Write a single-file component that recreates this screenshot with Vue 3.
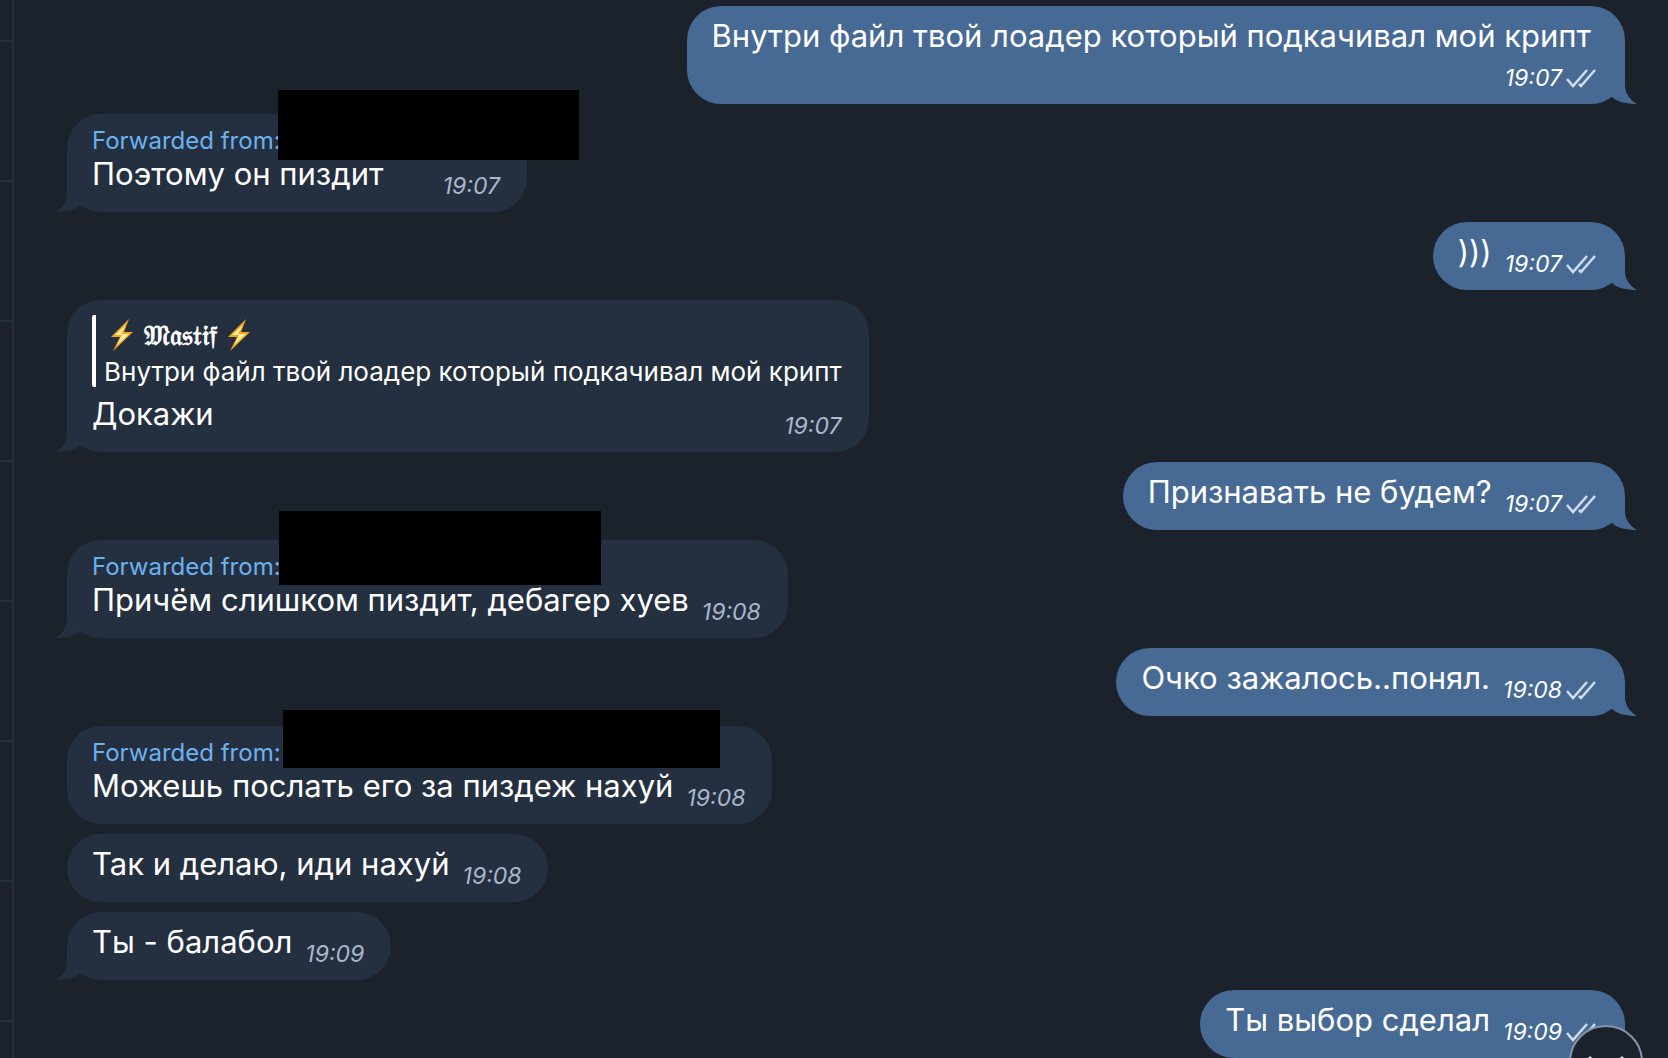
<script setup>
const messages = [
  { id: 1, out: true, text: 'Внутри файл твой лоадер который подкачивал мой крипт', time: '19:07', tail: true, wrapTime: true },
  { id: 2, text: 'Поэтому он пиздит', time: '19:07', tail: true, forwarded: true, width: 460, cover: { x: 211, y: -24, w: 301, h: 70 } },
  { id: 3, out: true, text: ')))', time: '19:07', tail: true },
  {
    id: 4,
    text: 'Докажи',
    time: '19:07',
    tail: true,
    reply: { author: '𝔐𝔞𝔰𝔱𝔦𝔣', text: 'Внутри файл твой лоадер который подкачивал мой крипт' }
  },
  { id: 5, out: true, text: 'Признавать не будем?', time: '19:07', tail: true },
  { id: 6, text: 'Причём слишком пиздит, дебагер хуев', time: '19:08', tail: true, forwarded: true, cover: { x: 212, y: -29, w: 322, h: 74 } },
  { id: 7, out: true, text: 'Очко зажалось..понял.', time: '19:08', tail: true },
  { id: 8, text: 'Можешь послать его за пиздеж нахуй', time: '19:08', forwarded: true, cover: { x: 216, y: -16, w: 437, h: 58 } },
  { id: 9, text: 'Так и делаю, иди нахуй', time: '19:08' },
  { id: 10, text: 'Ты - балабол', time: '19:09', tail: true },
  { id: 11, out: true, text: 'Ты выбор сделал', time: '19:09', tail: true }
]

function coverStyle(cover) {
  return {
    left: cover.x + 'px',
    top: cover.y + 'px',
    width: cover.w + 'px',
    height: cover.h + 'px'
  }
}

function scrollDown() {
  window.scrollTo(0, document.body.scrollHeight)
}
</script>

<template>
  <div class="app">
    <aside class="sidebar">
      <div v-for="n in 9" :key="n" class="dialog-row"></div>
    </aside>

    <main class="chat">
      <article
        v-for="m in messages"
        :key="m.id"
        class="bubble"
        :class="{ out: m.out, wrap: m.wrapTime }"
        :style="m.width ? { minWidth: m.width + 'px' } : null"
      >
        <svg v-if="m.tail" class="tail" viewBox="0 0 37 34">
          <path d="M0 0H25V17C26 24 30 30 37 34 27 34 17 32 12 27Z" />
        </svg>
        <div v-if="m.forwarded" class="forwarded">Forwarded from:</div>
        <blockquote v-if="m.reply" class="reply">
          <div class="reply-author">
            <svg class="bolt" viewBox="0 0 24 32">
              <path d="M19 0 1 18h9L3 32 23 13h-9z" fill="#f6a623" />
              <path d="M16 6 5 16h7L7 26 19 15h-8z" fill="#fff3a0" />
            </svg>
            <span>{{ m.reply.author }}</span>
            <svg class="bolt" viewBox="0 0 24 32">
              <path d="M19 0 1 18h9L3 32 23 13h-9z" fill="#f6a623" />
              <path d="M16 6 5 16h7L7 26 19 15h-8z" fill="#fff3a0" />
            </svg>
          </div>
          <div class="reply-text">{{ m.reply.text }}</div>
        </blockquote>
        <div class="body">
          <span class="text">{{ m.text }}</span>
          <span class="meta">
            <time>{{ m.time }}</time>
            <svg v-if="m.out" class="checks" viewBox="0 0 30 20">
              <path d="M1 11 7 18 21 2M13 16l2 2L29 2" />
            </svg>
          </span>
        </div>
        <div v-if="m.cover" class="cover" :style="coverStyle(m.cover)"></div>
      </article>
    </main>

    <button class="scroll-down" aria-label="Scroll down" @click="scrollDown">
      <svg viewBox="0 0 40 24">
        <path d="M3 2l17 17L37 2" />
      </svg>
    </button>
  </div>
</template>

<style>
body {
  margin: 0;
  background: #1b222b;
}
</style>

<style scoped>
.app {
  position: relative;
  display: flex;
  height: 100vh;
  overflow: hidden;
  background: #1b222b;
  color: #fff;
  font-family: Inter, "Noto Sans", sans-serif;
}
.sidebar {
  flex: none;
  width: 12px;
  border-right: 2px solid #243040;
  overflow: hidden;
}
.dialog-row {
  box-sizing: border-box;
  height: 140px;
  border-bottom: 2px solid #243040;
}
.dialog-row:first-child {
  height: 42px;
}
.chat {
  flex: 1;
  display: flex;
  flex-direction: column;
  align-items: flex-start;
  gap: 10px;
  padding: 6px 43px 0 53px;
}
.bubble {
  position: relative;
  flex: none;
  box-sizing: border-box;
  padding: 11px 27px 13px 25px;
  border-radius: 34px;
  background: #243040;
}
.bubble.out {
  align-self: flex-end;
  padding-right: 29px;
  background: #476a95;
}
.forwarded {
  height: 30px;
  font-size: 24px;
  line-height: 32px;
  color: #6cb2f0;
}
.body {
  display: flex;
  justify-content: space-between;
  align-items: flex-end;
  gap: 13px;
  height: 44px;
}
.text {
  align-self: flex-start;
  font-size: 31px;
  line-height: 38px;
  white-space: nowrap;
}
.meta {
  display: flex;
  align-items: center;
  gap: 4px;
  height: 26px;
  font-size: 23px;
  line-height: 26px;
  font-style: italic;
  color: #a9b8cc;
}
.out .meta {
  color: #fff;
}
.wrap .body {
  flex-direction: column;
  gap: 0;
  height: 74px;
}
.wrap .text {
  padding-right: 5px;
}
.checks {
  width: 30px;
  height: 20px;
  fill: none;
  stroke: #cfdded;
  stroke-width: 2.5;
}
.reply {
  margin: 4px 0 8px;
  padding-left: 8px;
  border-left: 4px solid #fff;
  border-radius: 2px;
  height: 72px;
}
.reply-author {
  display: flex;
  align-items: center;
  gap: 10px;
  height: 40px;
  padding-left: 6px;
  font-size: 28px;
  line-height: 40px;
  font-weight: 600;
}
.bolt {
  width: 24px;
  height: 32px;
}
.reply-text {
  font-size: 26px;
  line-height: 34px;
  white-space: nowrap;
}
.tail {
  position: absolute;
  right: -12px;
  bottom: 0;
  width: 37px;
  height: 34px;
  fill: #476a95;
}
.bubble:not(.out) .tail {
  right: auto;
  left: -12px;
  transform: scaleX(-1);
  fill: #243040;
}
.cover {
  position: absolute;
  z-index: 1;
  background: #000;
}
.scroll-down {
  position: absolute;
  right: 25px;
  bottom: -41px;
  width: 74px;
  height: 74px;
  padding: 13px 0 0;
  border: 2px solid #8695a8;
  border-radius: 50%;
  background: #1b222e;
  cursor: pointer;
}
.scroll-down svg {
  width: 40px;
  height: 24px;
  fill: none;
  stroke: #cfdded;
  stroke-width: 3;
}
</style>
